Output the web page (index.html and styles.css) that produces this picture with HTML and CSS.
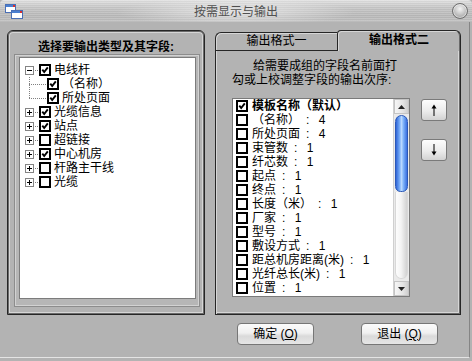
FILE: index.html
```html
<!DOCTYPE html>
<html lang="zh-CN">
<head>
<meta charset="utf-8">
<title>按需显示与输出</title>
<link rel="stylesheet" href="styles.css">
</head>
<body>
<svg class="defs" width="0" height="0" aria-hidden="true">
  <symbol id="cb" viewBox="0 0 12 12"><rect x="1" y="1" width="10" height="10" fill="#fff" stroke="#000" stroke-width="2"/></symbol>
  <symbol id="cbon" viewBox="0 0 12 12"><rect x="1" y="1" width="10" height="10" fill="#fff" stroke="#000" stroke-width="2"/><path d="M3.3 5.6 L5.2 8 L8.8 3.3" fill="none" stroke="#000" stroke-width="1.9"/></symbol>
  <symbol id="minus" viewBox="0 0 9 9"><rect x="0.5" y="0.5" width="8" height="8" fill="#fff" stroke="#848484"/><path d="M2 4.5H7" stroke="#000"/></symbol>
  <symbol id="plus" viewBox="0 0 9 9"><rect x="0.5" y="0.5" width="8" height="8" fill="#fff" stroke="#848484"/><path d="M2 4.5H7M4.5 2V7" stroke="#000"/></symbol>
</svg>
<div class="window">
  <header class="titlebar">
    <div class="tb-left">
      <svg class="appicon" width="18" height="15" viewBox="0 0 18 15">
        <rect x="0.5" y="0.5" width="10" height="8" fill="#fff" stroke="#4a6fb5"/>
        <rect x="1" y="1" width="9" height="2" fill="#4a7fd0"/>
        <rect x="8" y="1" width="2" height="2" fill="#d83030"/>
        <rect x="6.5" y="6.5" width="11" height="8" fill="#fff" stroke="#4a6fb5"/>
        <rect x="7" y="7" width="10" height="2" fill="#4a7fd0"/>
        <rect x="15" y="7" width="2" height="2" fill="#d83030"/>
      </svg>
    </div>
    <div class="tb-title">按需显示与输出</div>
    <div class="tb-right">
      <span class="closebtn"></span>
    </div>
  </header>

  <main class="client">
    <div class="panes">
      <section class="left-pane">
        <h2 class="pane-title">选择要输出类型及其字段:</h2>
        <div class="tree-frame">
          <div class="tree-box">
            <div class="tnode">
              <svg class="exp"><use href="#minus"/></svg>
              <span class="stub"></span>
              <svg class="cb"><use href="#cbon"/></svg>
              <span class="tlabel">电线杆</span>
            </div>
            <div class="children">
              <div class="tchild">
                <span class="hline"></span>
                <svg class="cb"><use href="#cbon"/></svg>
                <span class="tlabel">（名称）</span>
              </div>
              <div class="tchild last">
                <span class="hline"></span>
                <svg class="cb"><use href="#cbon"/></svg>
                <span class="tlabel">所处页面</span>
              </div>
            </div>
            <div class="tnode">
              <svg class="exp"><use href="#plus"/></svg>
              <span class="stub"></span>
              <svg class="cb"><use href="#cbon"/></svg>
              <span class="tlabel">光缆信息</span>
            </div>
            <div class="tnode">
              <svg class="exp"><use href="#plus"/></svg>
              <span class="stub"></span>
              <svg class="cb"><use href="#cbon"/></svg>
              <span class="tlabel">站点</span>
            </div>
            <div class="tnode">
              <svg class="exp"><use href="#plus"/></svg>
              <span class="stub"></span>
              <svg class="cb"><use href="#cb"/></svg>
              <span class="tlabel">超链接</span>
            </div>
            <div class="tnode">
              <svg class="exp"><use href="#plus"/></svg>
              <span class="stub"></span>
              <svg class="cb"><use href="#cbon"/></svg>
              <span class="tlabel">中心机房</span>
            </div>
            <div class="tnode">
              <svg class="exp"><use href="#plus"/></svg>
              <span class="stub"></span>
              <svg class="cb"><use href="#cb"/></svg>
              <span class="tlabel">杆路主干线</span>
            </div>
            <div class="tnode">
              <svg class="exp"><use href="#plus"/></svg>
              <span class="stub"></span>
              <svg class="cb"><use href="#cb"/></svg>
              <span class="tlabel">光缆</span>
            </div>
          </div>
        </div>
      </section>

      <section class="right-pane">
        <div class="tabs">
          <div class="tab">输出格式一</div>
          <div class="tab active">输出格式二</div>
        </div>
        <div class="tab-body">
          <p class="hint">给需要成组的字段名前面打<br>勾或上校调整字段的输出次序:</p>
          <div class="list-row">
            <div class="listbox">
              <ul class="items">
                <li class="bold"><svg class="cb"><use href="#cbon"/></svg><span>模板名称（默认）</span></li>
                <li><svg class="cb"><use href="#cb"/></svg><span>（名称）&ensp;:&ensp;&nbsp;4</span></li>
                <li><svg class="cb"><use href="#cb"/></svg><span>所处页面&ensp;:&ensp;&nbsp;4</span></li>
                <li><svg class="cb"><use href="#cb"/></svg><span>束管数&ensp;:&ensp;&nbsp;1</span></li>
                <li><svg class="cb"><use href="#cb"/></svg><span>纤芯数&ensp;:&ensp;&nbsp;1</span></li>
                <li><svg class="cb"><use href="#cb"/></svg><span>起点&ensp;:&ensp;&nbsp;1</span></li>
                <li><svg class="cb"><use href="#cb"/></svg><span>终点&ensp;:&ensp;&nbsp;1</span></li>
                <li><svg class="cb"><use href="#cb"/></svg><span>长度（米）&ensp;:&ensp;&nbsp;1</span></li>
                <li><svg class="cb"><use href="#cb"/></svg><span>厂家&ensp;:&ensp;&nbsp;1</span></li>
                <li><svg class="cb"><use href="#cb"/></svg><span>型号&ensp;:&ensp;&nbsp;1</span></li>
                <li><svg class="cb"><use href="#cb"/></svg><span>敷设方式&ensp;:&ensp;&nbsp;1</span></li>
                <li><svg class="cb"><use href="#cb"/></svg><span>距总机房距离(米)&ensp;:&ensp;&nbsp;1</span></li>
                <li><svg class="cb"><use href="#cb"/></svg><span>光纤总长(米)&ensp;:&ensp;&nbsp;1</span></li>
                <li><svg class="cb"><use href="#cb"/></svg><span>位置&ensp;:&ensp;&nbsp;1</span></li>
                <li><svg class="cb"><use href="#cb"/></svg></li>
              </ul>
              <div class="vscroll">
                <div class="sb-btn"><svg width="7" height="4" viewBox="0 0 7 4"><path d="M0 4 L3.5 0 L7 4Z" fill="#222"/></svg></div>
                <div class="sb-thumb"></div>
                <div class="sb-track"></div>
                <div class="sb-btn"><svg width="7" height="4" viewBox="0 0 7 4"><path d="M0 0 L3.5 4 L7 0Z" fill="#222"/></svg></div>
              </div>
            </div>
            <div class="order-btns">
              <button class="mini" type="button" aria-label="上移"><svg width="8" height="12" viewBox="0 0 8 12"><path d="M4 3V12" stroke="#000"/><path d="M1.5 4.5 L4 0.5 L6.5 4.5Z" fill="#000"/></svg></button>
              <button class="mini" type="button" aria-label="下移"><svg width="8" height="12" viewBox="0 0 8 12"><path d="M4 0V9" stroke="#000"/><path d="M1.5 7.5 L4 11.5 L6.5 7.5Z" fill="#000"/></svg></button>
            </div>
          </div>
        </div>
      </section>
    </div>

    <footer class="actions">
      <button class="btn" type="button">确定 (<u>O</u>)</button>
      <button class="btn" type="button">退出 (<u>Q</u>)</button>
    </footer>
  </main>
</div>
</body>
</html>
```

FILE: styles.css
```css
* { box-sizing: border-box; }
html, body { margin: 0; padding: 0; }
body {
  width: 472px;
  height: 361px;
  overflow: hidden;
  background: #b3b3b3;
  font-family: "Liberation Sans", "Noto Sans CJK SC", sans-serif;
  font-size: 12px;
  color: #000;
}
.defs { display: block; width: 0; height: 0; overflow: hidden; }

.window {
  width: 472px;
  height: 361px;
  display: flex;
  flex-direction: column;
  background: #b3b3b3;
}

/* title bar */
.titlebar {
  height: 22px;
  flex: none;
  display: grid;
  grid-template-columns: 1fr auto 1fr;
  align-items: center;
  background:
    radial-gradient(ellipse 120px 14px at 50% 55%, rgba(255,255,255,0.55), rgba(255,255,255,0) 100%),
    repeating-linear-gradient(to bottom, rgba(255,255,255,0.12) 0 1px, rgba(0,0,0,0.03) 1px 2px),
    linear-gradient(to bottom, #e2e2e2 0%, #c6c6c6 35%, #b9b9b9 75%, #c2c2c2 100%);
  border-radius: 4px 4px 0 0;
}
.tb-left { display: flex; align-items: center; padding-left: 5px; padding-top: 1px; }
.appicon { display: block; }
.tb-title {
  font-size: 12px;
  line-height: 14px;
  color: #505050;
  padding-top: 1px;
}
.tb-right { display: flex; justify-content: flex-end; padding-right: 4px; }
.closebtn {
  width: 16px;
  height: 16px;
  border-radius: 50%;
  border: 1px solid #6e6e6e;
  background: radial-gradient(circle at 50% 35%, #f4f4f4 0%, #c8c8c8 45%, #8e8e8e 100%);
  box-shadow: inset 0 0 0 1px rgba(255,255,255,0.5);
}

/* client area */
.client {
  flex: 1;
  display: flex;
  flex-direction: column;
  margin-right: 2px;
  margin-bottom: 3px;
  border-right: 1px solid #858585;
  border-bottom: 1px solid #e4e4e4;
}
.panes {
  display: flex;
  gap: 10px;
  padding: 8px 0 0 7px;
}

/* left pane */
.left-pane {
  width: 198px;
  height: 285px;
  border: 1px solid #262626;
  border-radius: 6px 6px 0 0;
  box-shadow: inset 0 0 0 1px #6a6a6a, inset 0 0 0 2px #d6d6d6;
  display: flex;
  flex-direction: column;
}
.pane-title {
  margin: 0;
  height: 23px;
  padding-top: 9px;
  font-size: 12px;
  line-height: 14px;
  font-weight: bold;
  text-align: center;
}
.tree-frame {
  margin: 0 4px 7px 6px;
  height: 253px;
  border: 1px solid #8c8c8c;
  box-shadow: inset 0 0 0 1px #d2d2d2;
  padding: 2px 3px 7px 4px;
  background: #b6b6b6;
}
.tree-box {
  height: 242px;
  background: #fff;
  border: 1px solid #7c7c7c;
  padding-top: 5px;
  padding-left: 5px;
}
.tnode, .tchild {
  height: 14px;
  display: flex;
  align-items: center;
}
.exp { width: 9px; height: 9px; flex: none; display: block; }
.stub {
  width: 3px;
  height: 1px;
  margin: 0 1px;
  flex: none;
  background: repeating-linear-gradient(to right, #808080 0 1px, transparent 1px 2px);
}
.cb { width: 12px; height: 12px; flex: none; display: block; }
.tlabel { margin-left: 3px; line-height: 14px; white-space: nowrap; }
.children { display: flex; flex-direction: column; }
.tchild {
  background: repeating-linear-gradient(to bottom, #808080 0 1px, transparent 1px 2px) no-repeat 4px 0 / 1px 100%;
}
.tchild.last { background-size: 1px 50%; }
.hline {
  width: 18px;
  height: 1px;
  margin-left: 4px;
  flex: none;
  background: repeating-linear-gradient(to right, #808080 0 1px, transparent 1px 2px);
}

/* right pane */
.right-pane {
  width: 246px;
  display: flex;
  flex-direction: column;
}
.tabs {
  height: 21px;
  display: flex;
  align-items: flex-end;
}
.tab {
  width: 122px;
  height: 19px;
  border: 1px solid #262626;
  border-right: none;
  border-radius: 6px 0 0 0;
  box-shadow: inset 1px 1px 0 #d6d6d6;
  text-align: center;
  line-height: 17px;
  font-size: 12px;
}
.tab.active {
  width: 124px;
  height: 21px;
  border: 1px solid #262626;
  border-bottom: none;
  border-radius: 4px 6px 0 0;
  font-weight: bold;
  line-height: 19px;
  box-shadow: inset 1px 1px 0 #d6d6d6, inset -1px 0 0 #6a6a6a;
}
.tab-body {
  height: 264px;
  border: 1px solid #262626;
  border-top: none;
  box-shadow: inset 1px 0 0 #d6d6d6, inset -1px -1px 0 #6a6a6a, inset -2px -2px 0 #d6d6d6;
  padding: 9px 0 0 16px;
}
.hint {
  margin: 0;
  font-size: 12px;
  line-height: 13.5px;
  text-indent: 21px;
  white-space: nowrap;
}
.list-row {
  display: flex;
  margin-top: 11px;
}
.listbox {
  width: 178px;
  height: 199px;
  border: 1px solid #7a7a7a;
  background: #fff;
  display: flex;
}
.items {
  list-style: none;
  margin: 0;
  padding: 0 0 0 3px;
  flex: 1;
  overflow: hidden;
}
.items li {
  height: 14px;
  flex: none;
  display: flex;
  align-items: center;
  white-space: nowrap;
}
.items li span { margin-left: 4px; line-height: 14px; }
.items li.bold span { font-weight: bold; }

.vscroll {
  width: 16px;
  flex: none;
  display: flex;
  flex-direction: column;
  background: #eaeaea;
  border-left: 1px solid #d0d0d0;
}
.sb-btn {
  height: 15px;
  display: flex;
  align-items: center;
  justify-content: center;
  background: linear-gradient(to right, #f6f6f6, #e4e4e4 60%, #cfcfcf);
  border: 1px solid #c4c4c4;
}
.sb-thumb {
  height: 77px;
  margin: 1px 1px 0 1px;
  border-radius: 7px 7px 6px 6px;
  border: 1px solid #2a58b8;
  background: linear-gradient(to right, #2f64d6 0%, #6fa6f6 30%, #b9d8ff 50%, #78aef8 70%, #3a6fe0 100%);
}
.sb-track {
  flex: 1;
  margin: 0 1px 2px 1px;
  border-radius: 0 0 7px 7px;
  background: linear-gradient(to right, #fdfdfd 0%, #f4f4f4 45%, #d2d2d2 100%);
  border: 1px solid #d8d8d8;
  border-top: none;
}

.order-btns {
  display: flex;
  flex-direction: column;
  gap: 18px;
  margin-left: 11px;
  padding-top: 1px;
}
.mini {
  width: 26px;
  height: 22px;
  padding: 0;
  border: 1px solid #7a7a7a;
  border-radius: 3px;
  background: linear-gradient(to bottom, #fdfdfd 0%, #ececec 55%, #d2d2d2 100%);
  display: flex;
  align-items: center;
  justify-content: center;
}
.mini svg { display: block; }

/* bottom buttons */
.actions {
  display: flex;
  gap: 47px;
  padding: 8px 0 0 237px;
}
.btn {
  width: 77px;
  height: 22px;
  padding: 0;
  border: 1px solid #767676;
  border-radius: 4px;
  background: linear-gradient(to bottom, #fbfbfb 0%, #f0f0f0 45%, #dadada 60%, #e6e6e6 100%);
  font-family: "Liberation Sans", "Noto Sans CJK SC", sans-serif;
  font-size: 12px;
  line-height: 18px;
  color: #000;
}
.btn u { text-decoration: underline; text-underline-offset: 1px; }
```
